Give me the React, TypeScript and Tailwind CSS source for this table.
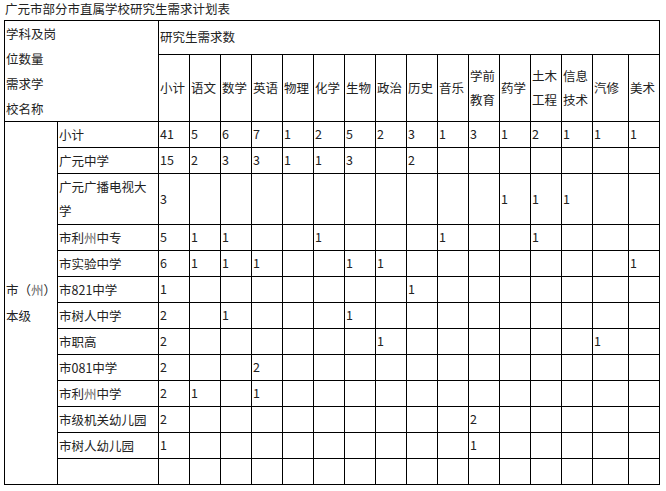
import React from "react";

const subjects: string[][] = [
  ["小计"],
  ["语文"],
  ["数学"],
  ["英语"],
  ["物理"],
  ["化学"],
  ["生物"],
  ["政治"],
  ["历史"],
  ["音乐"],
  ["学前", "教育"],
  ["药学"],
  ["土木", "工程"],
  ["信息", "技术"],
  ["汽修"],
  ["美术"],
];

// name lines, then 16 values (empty string = blank cell)
const rows: { name: React.ReactNode; values: string[] }[] = [
  { name: "小计", values: ["41", "5", "6", "7", "1", "2", "5", "2", "3", "1", "3", "1", "2", "1", "1", "1"] },
  { name: "广元中学", values: ["15", "2", "3", "3", "1", "1", "3", "", "2", "", "", "", "", "", "", ""] },
  {
    name: (
      <>
        广元广播电视大
        <br />学
      </>
    ),
    values: ["3", "", "", "", "", "", "", "", "", "", "", "1", "1", "1", "", ""],
  },
  {
    name: (
      <>
        市利<span className="text-[#666]">州</span>中专
      </>
    ),
    values: ["5", "1", "1", "", "", "1", "", "", "", "1", "", "", "1", "", "", ""],
  },
  { name: "市实验中学", values: ["6", "1", "1", "1", "", "", "1", "1", "", "", "", "", "", "", "", "1"] },
  { name: "市821中学", values: ["1", "", "", "", "", "", "", "", "1", "", "", "", "", "", "", ""] },
  { name: "市树人中学", values: ["2", "", "1", "", "", "", "1", "", "", "", "", "", "", "", "", ""] },
  { name: "市职高", values: ["2", "", "", "", "", "", "", "1", "", "", "", "", "", "", "1", ""] },
  { name: "市081中学", values: ["2", "", "", "2", "", "", "", "", "", "", "", "", "", "", "", ""] },
  {
    name: (
      <>
        市利<span className="text-[#666]">州</span>中学
      </>
    ),
    values: ["2", "1", "", "1", "", "", "", "", "", "", "", "", "", "", "", ""],
  },
  { name: "市级机关幼儿园", values: ["2", "", "", "", "", "", "", "", "", "", "2", "", "", "", "", ""] },
  { name: "市树人幼儿园", values: ["1", "", "", "", "", "", "", "", "", "", "1", "", "", "", "", ""] },
  { name: "", values: Array(16).fill("") },
];

const cell = "bg-white flex items-center pl-px overflow-hidden whitespace-nowrap";

export default function App() {
  return (
    <div
      className="min-h-screen bg-white pl-[4px] text-[12.5px] text-[#222]"
      style={{ fontFamily: '"Noto Sans CJK SC", "Noto Sans", sans-serif' }}
    >
      <div className="h-[20px] pl-px leading-[18px]">广元市部分市直属学校研究生需求计划表</div>

      <div className="grid w-[656px] grid-cols-[52px_100px_repeat(14,30px)_35px_30px] grid-rows-[33px_66px_25px_25px_50px_repeat(10,25px)] gap-px bg-black p-px">
        <div className={`${cell} col-span-2 row-span-2 leading-[25px]`}>
          <div>
            学科及岗
            <br />
            位数量
            <br />
            需求学
            <br />
            校名称
          </div>
        </div>
        <div className={`${cell} col-span-16`}>研究生需求数</div>

        {subjects.map((s, i) => (
          <div key={i} className={`${cell} leading-[24px]`}>
            <div>
              {s.map((line, j) => (
                <div key={j}>{line}</div>
              ))}
            </div>
          </div>
        ))}

        <div className={`${cell} row-span-13 leading-[26px]`}>
          <div>
            市（<span className="text-[#666]">州</span>）
            <br />
            本级
          </div>
        </div>

        {rows.map((r, i) => (
          <React.Fragment key={i}>
            <div className={`${cell} leading-[24px]`}>
              <div>{r.name}</div>
            </div>
            {r.values.map((v, j) => (
              <div key={j} className={cell}>
                {v}
              </div>
            ))}
          </React.Fragment>
        ))}
      </div>
    </div>
  );
}
